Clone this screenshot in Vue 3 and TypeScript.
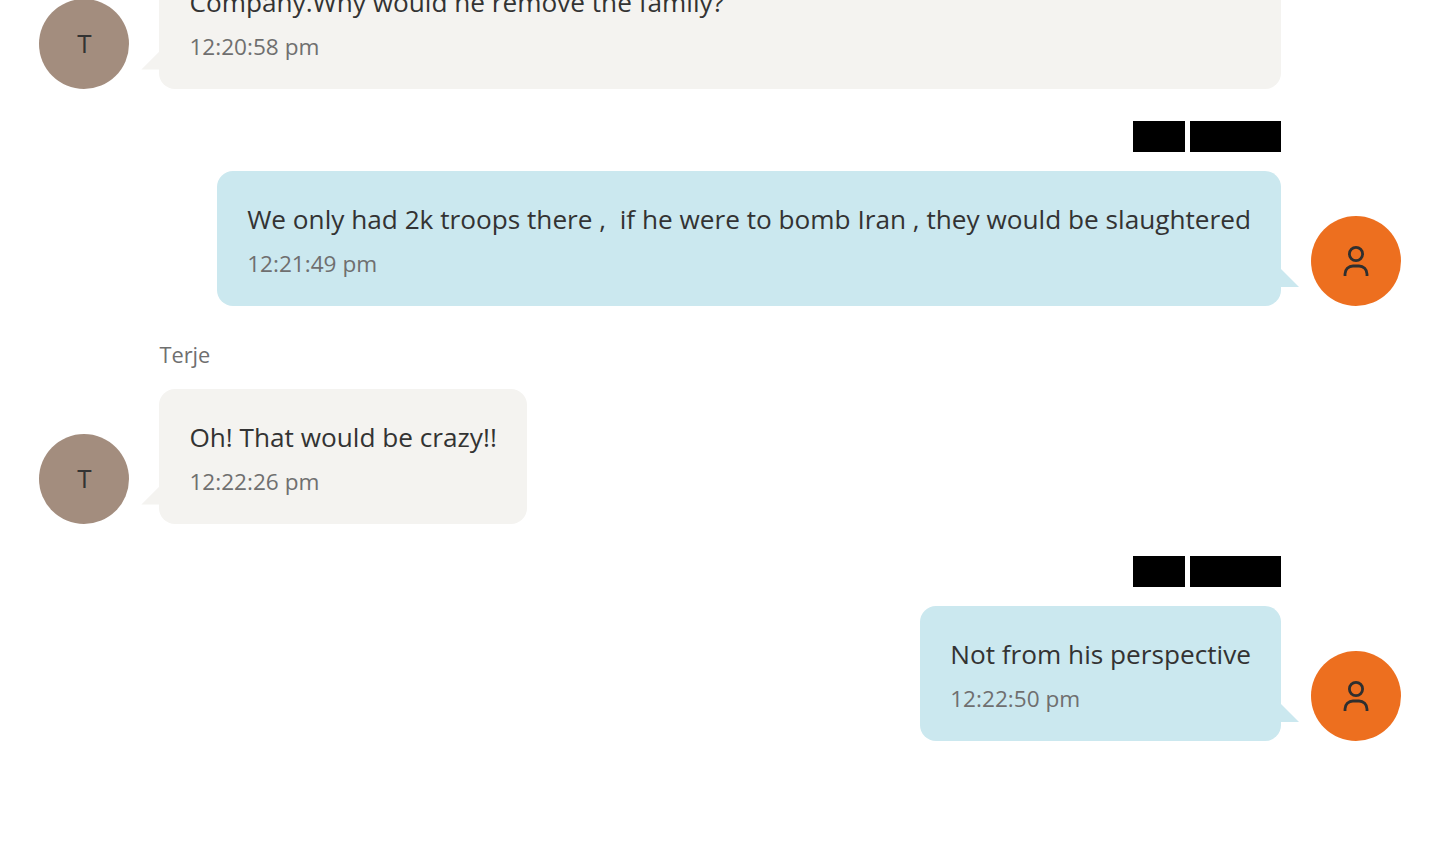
<script setup lang="ts">
interface Message {
  id: number;
  mine: boolean;
  name?: string;
  text: string;
  time: string;
  full?: boolean;
}

const messages: Message[] = [
  { id: 1, mine: false, text: "Company.Why would he remove the family?", time: "12:20:58 pm", full: true },
  { id: 2, mine: true, text: "We only had 2k troops there ,  if he were to bomb Iran , they would be slaughtered", time: "12:21:49 pm" },
  { id: 3, mine: false, name: "Terje", text: "Oh! That would be crazy!!", time: "12:22:26 pm" },
  { id: 4, mine: true, text: "Not from his perspective", time: "12:22:50 pm" },
];
</script>

<template>
  <main class="chat">
    <div
      v-for="msg in messages"
      :key="msg.id"
      class="message"
      :class="msg.mine ? 'message-mine' : 'message-other'"
    >
      <div v-if="msg.mine" class="sender sender-hidden">
        <span class="redact redact-short"></span>
        <span class="redact redact-long"></span>
      </div>
      <div v-else-if="msg.name" class="sender">{{ msg.name }}</div>

      <div class="row">
        <div class="avatar">
          <svg v-if="msg.mine" width="28" height="32" viewBox="0 0 28 32" fill="none" stroke="#2f2f2f" stroke-width="2.8">
            <circle cx="14" cy="9" r="6.6" />
            <path d="M3 31v-2a8 8 0 0 1 8-8h6a8 8 0 0 1 8 8v2" />
          </svg>
          <span v-else class="initial">T</span>
        </div>
        <div class="bubble" :class="{ 'bubble-full': msg.full }">
          <p class="text">{{ msg.text }}</p>
          <p class="time">{{ msg.time }}</p>
        </div>
      </div>
    </div>
  </main>
</template>

<style>
html,
body {
  margin: 0;
  background: #fff;
}
</style>

<style scoped>
.chat {
  height: 850px;
  box-sizing: border-box;
  overflow: hidden;
  display: flex;
  flex-direction: column;
  justify-content: flex-end;
  gap: 32px;
  padding: 0 38px 109px 39.4px;
  font-family: "Open Sans", sans-serif;
  color: #333;
}

.message {
  display: flex;
  flex-direction: column;
  flex-shrink: 0;
  gap: 19.5px;
}

.message-mine {
  align-items: flex-end;
}

.sender {
  height: 31px;
  margin-left: 120px;
  font-size: 21.8px;
  line-height: 33px;
  color: #6f6f6f;
}

.sender-hidden {
  display: flex;
  gap: 5px;
  margin-left: 0;
  margin-right: 120px;
}

.redact {
  display: block;
  height: 31px;
  background: #000;
}

.redact-short {
  width: 52px;
}

.redact-long {
  width: 91px;
}

.row {
  display: flex;
  align-items: flex-end;
  gap: 30px;
}

.message-mine .row {
  flex-direction: row-reverse;
}

.avatar {
  flex: 0 0 90px;
  width: 90px;
  height: 90px;
  border-radius: 50%;
  display: flex;
  align-items: center;
  justify-content: center;
  background: #a38d7e;
  font-size: 26px;
}

.initial {
  margin-bottom: 2px;
}

.message-mine .avatar {
  background: #ed6f1f;
}

.bubble {
  position: relative;
  box-sizing: border-box;
  height: 135px;
  padding: 29px 30px 0;
  border-radius: 16px;
  background: #f4f3f0;
}

.bubble-full {
  width: 1121.6px;
}

.message-mine .bubble {
  background: #cbe8ef;
}

.bubble::after {
  content: "";
  position: absolute;
  bottom: 19px;
  left: -18px;
  width: 18px;
  height: 18px;
  background: #f4f3f0;
  clip-path: polygon(100% 0, 100% 100%, 0 100%);
}

.message-mine .bubble::after {
  left: auto;
  right: -18px;
  background: #cbe8ef;
  clip-path: polygon(0 0, 100% 100%, 0 100%);
}

.text {
  margin: 0;
  font-size: 26.2px;
  line-height: 38px;
  white-space: pre;
}

.time {
  margin: 11px 0 0;
  font-size: 22.6px;
  line-height: 30px;
  color: #6f6f6f;
}
</style>
